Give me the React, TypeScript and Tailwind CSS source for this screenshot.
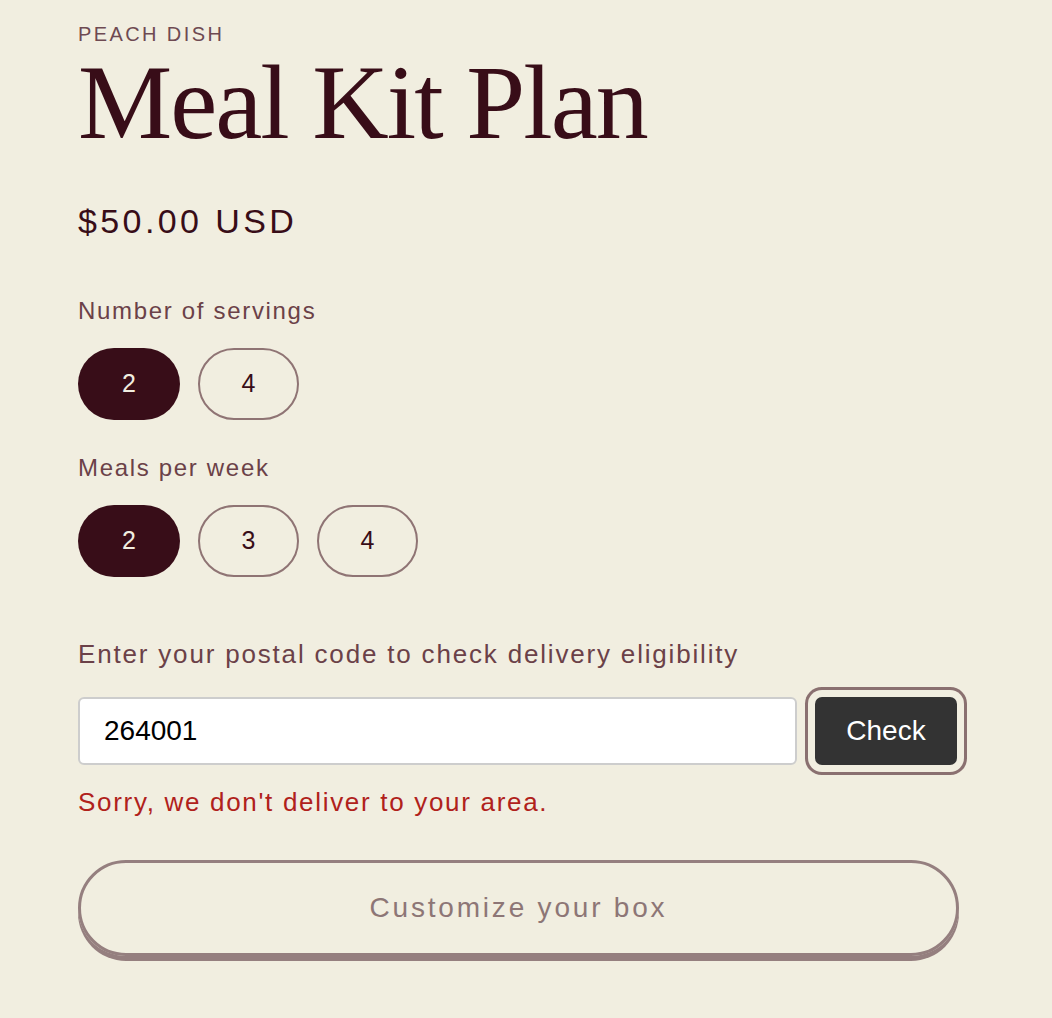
const sans = "font-['Liberation_Sans',Arial,sans-serif]";

const SERVINGS = ["2", "4"];
const MEALS = ["2", "3", "4"];

function Pill({ label, active }: { label: string; active?: boolean }) {
  return (
    <button
      className={
        active
          ? "flex h-[72px] w-[102px] items-center justify-center rounded-full bg-[#380d18] text-[25px] text-[#f1eee0]"
          : "flex h-[72px] w-[101px] items-center justify-center rounded-full border-2 border-[#8f7474] text-[25px] text-[#380d18]"
      }
    >
      {label}
    </button>
  );
}

export default function App() {
  return (
    <div className={`min-h-[1018px] bg-[#f1eee0] ${sans}`}>
      <div className="w-[1000px] pl-[78px] pt-[22px]">
        <p className="text-[20px] leading-[24px] tracking-[0.12em] text-[#6e4a52]">
          PEACH DISH
        </p>
        <h1 className="mt-[4px] font-['Liberation_Serif',serif] text-[106px] leading-[106px] tracking-[-2px] text-[#380d18]">
          Meal Kit Plan
        </h1>

        <p className="mt-[45px] text-[34px] leading-[40px] tracking-[0.1em] text-[#380d18]">
          $50.00 USD
        </p>

        {/* 人数 */}
        <p className="mt-[54px] text-[24px] leading-[32px] tracking-[0.07em] text-[#6b4148]">
          Number of servings
        </p>
        <div className="mt-[21px] flex gap-[18px]">
          {SERVINGS.map((s, i) => (
            <Pill key={s} label={s} active={i === 0} />
          ))}
        </div>

        {/* 週あたりの食数 */}
        <p className="mt-[32px] text-[24px] leading-[32px] tracking-[0.07em] text-[#6b4148]">
          Meals per week
        </p>
        <div className="mt-[21px] flex gap-[18px]">
          {MEALS.map((s, i) => (
            <Pill key={s} label={s} active={i === 0} />
          ))}
        </div>

        {/* 郵便番号チェック */}
        <p className="mt-[61px] text-[26px] leading-[32px] tracking-[0.07em] text-[#6b4148]">
          Enter your postal code to check delivery eligibility
        </p>
        <div className="mt-[27px] flex items-center gap-[18px]">
          <div className="flex h-[68px] w-[719px] shrink-0 items-center rounded-[6px] border-2 border-[#cdcdcd] bg-white pl-[24px] text-[28px] text-black">
            264001
          </div>
          <button className="flex h-[68px] w-[142px] shrink-0 items-center justify-center rounded-[7px] bg-[#333333] text-[28px] text-white shadow-[0_0_0_7px_#f1eee0,0_0_0_10px_#8a7070]">
            Check
          </button>
        </div>
        <p className="mt-[21px] text-[26px] leading-[32px] tracking-[0.065em] text-[#b0211b]">
          Sorry, we don't deliver to your area.
        </p>

        <button className="mt-[42px] flex h-[96px] w-[881px] items-center justify-center rounded-full border-[3px] border-[#957f7f] text-[28px] tracking-[0.1em] text-[#8d7676] shadow-[0_5px_0_#957f7f]">
          Customize your box
        </button>
      </div>
    </div>
  );
}
